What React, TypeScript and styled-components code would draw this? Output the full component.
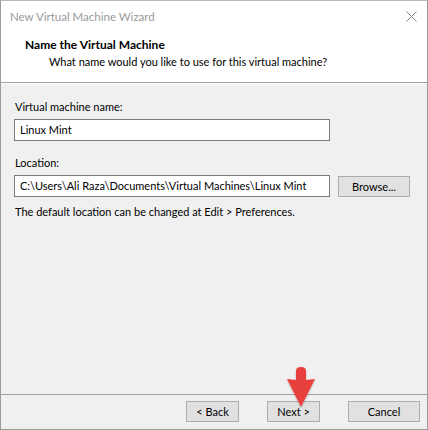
import styled, { createGlobalStyle } from 'styled-components';

const GlobalStyle = createGlobalStyle`
  html, body {
    margin: 0;
    padding: 0;
    background: #ffffff;
  }
  * {
    box-sizing: border-box;
  }
`;

const Window = styled.div`
  position: relative;
  width: 428px;
  height: 430px;
  display: flex;
  flex-direction: column;
  border: 1px solid #9c9c9c;
  border-top-color: #b8b8b8;
  background: #f0f0f0;
  font-family: Lato, 'Liberation Sans', sans-serif;
  font-size: 11px;
  color: #000;
  overflow: hidden;
`;

const TitleBar = styled.div`
  height: 31px;
  display: flex;
  align-items: center;
  justify-content: space-between;
  padding: 0 10px 0 9px;
  background: #fff;
  color: #9a9a9a;
  font-size: 11.5px;
`;

const CloseIcon = styled.svg`
  width: 11px;
  height: 11px;
`;

const Header = styled.div`
  background: #fff;
  height: 51px;
  padding: 5px 0 0 24px;
  border-bottom: 1px solid #a0a0a0;
`;

const HeaderTitle = styled.div`
  font-weight: bold;
  font-size: 12px;
  line-height: 16px;
`;

const HeaderSubtitle = styled.div`
  padding-left: 24px;
  line-height: 17px;
`;

const Body = styled.div`
  flex: 1;
  padding: 15px 17px 0 13px;
  display: flex;
  flex-direction: column;
  border-top: 1px solid #fff;
`;

const Label = styled.div<{ $top?: number }>`
  line-height: 16px;
  margin-top: ${({ $top }) => $top ?? 0}px;
  padding-left: 1px;
`;

const FieldRow = styled.div`
  display: flex;
  align-items: center;
  gap: 8px;
  margin-top: 4px;
`;

const TextBox = styled.div`
  width: 316px;
  height: 22px;
  border: 1px solid #7a7a7a;
  background: #fff;
  padding: 0 5px;
  line-height: 20px;
  white-space: nowrap;
  overflow: hidden;
`;

const Button = styled.button<{ $w: number }>`
  width: ${({ $w }) => $w}px;
  height: 21px;
  border: 1px solid #adadad;
  background: #e1e1e1;
  font-family: inherit;
  font-size: 11px;
  color: #000;
  padding: 0;
  line-height: 19px;
`;

const Hint = styled.div`
  line-height: 16px;
  margin-top: 7px;
  padding-left: 1px;
`;

const Footer = styled.div`
  height: 35px;
  border-top: 1px solid #a0a0a0;
  display: flex;
  align-items: flex-start;
  justify-content: flex-end;
  gap: 28px;
  padding: 6px 7px 0 0;
`;

const NavGroup = styled.div`
  display: flex;
  gap: 28px;
`;

const Arrow = styled.svg`
  position: absolute;
  left: 282px;
  top: 364px;
  width: 36px;
  height: 46px;
`;

export default function App() {
  return (
    <>
      <GlobalStyle />
      <Window>
        <TitleBar>
          <span>New Virtual Machine Wizard</span>
          <CloseIcon viewBox="0 0 11 11">
            <path d="M0.5 0.5 L10.5 10.5 M10.5 0.5 L0.5 10.5" stroke="#8a8a8a" strokeWidth="1" fill="none" />
          </CloseIcon>
        </TitleBar>
        <Header>
          <HeaderTitle>Name the Virtual Machine</HeaderTitle>
          <HeaderSubtitle>What name would you like to use for this virtual machine?</HeaderSubtitle>
        </Header>
        <Body>
          <Label>Virtual machine name:</Label>
          <FieldRow>
            <TextBox>Linux Mint</TextBox>
          </FieldRow>
          <Label $top={14}>Location:</Label>
          <FieldRow>
            <TextBox>C:\Users\Ali Raza\Documents\Virtual Machines\Linux Mint</TextBox>
            <Button $w={72}>Browse...</Button>
          </FieldRow>
          <Hint>The default location can be changed at Edit &gt; Preferences.</Hint>
        </Body>
        <Footer>
          <NavGroup>
            <Button $w={53}>&lt; Back</Button>
            <Button $w={53}>Next &gt;</Button>
          </NavGroup>
          <Button $w={72}>Cancel</Button>
        </Footer>
        <Arrow viewBox="0 0 36 46">
          <defs>
            <filter id="sh" x="-30%" y="-30%" width="160%" height="160%">
              <feDropShadow dx="0" dy="1" stdDeviation="1" floodColor="#000" floodOpacity="0.25" />
            </filter>
          </defs>
          <path
            d="M13 6 Q13 2 18 2 Q23 2 23 6 L23 15 L32 14 L18 42 L4 14 L13 15 Z"
            fill="#e8403e"
            filter="url(#sh)"
          />
        </Arrow>
      </Window>
    </>
  );
}
